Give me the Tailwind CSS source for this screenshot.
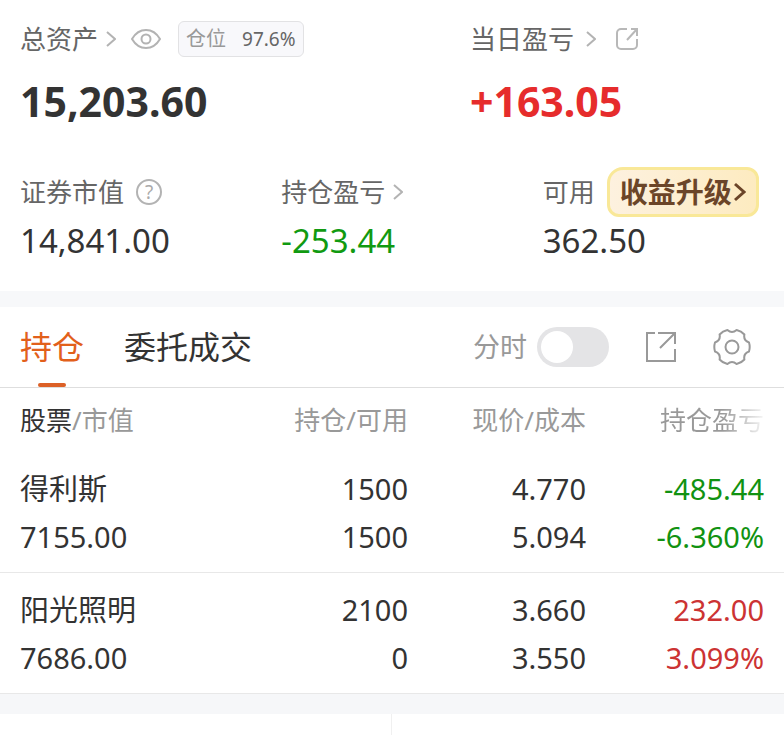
<!DOCTYPE html>
<html lang="zh-CN">
<head>
    <meta charset="UTF-8">
    <meta name="viewport" content="width=device-width, initial-scale=1.0">
    <title>持仓</title>
    <script src="https://cdn.jsdelivr.net/npm/@tailwindcss/browser@4"></script>
</head>
<body class="bg-white font-['Noto_Sans','Noto_Sans_CJK_SC',sans-serif] text-[#333]">

    <!-- account summary -->
    <section class="pt-[21px] pb-[26px]">
        <div class="grid grid-cols-[450fr_334fr]">
            <div class="pl-5">
                <div class="flex h-9 items-center whitespace-nowrap">
                    <a href="#" class="flex items-center gap-2 text-[26px] text-[#666]">
                        总资产
                        <svg class="h-4 w-2.5" viewBox="0 0 10 16" fill="none" stroke="#b3b3b3" stroke-width="2"><path d="M1 1l8 7-8 7"/></svg>
                    </a>
                    <button type="button" aria-label="隐藏金额" class="ml-[15px]">
                        <svg class="h-5 w-[30px]" viewBox="0 0 30 20" fill="none" stroke="#b3b3b3" stroke-width="2"><path d="M1 10C8-2 22-2 29 10C22 22 8 22 1 10Z"/><circle cx="15" cy="10" r="4.5"/></svg>
                    </button>
                    <div class="ml-[17px] flex h-9 items-center gap-4 rounded-md border border-[#e2e2e4] bg-[#f8f8fb] px-[7px] text-[20px]">
                        <span class="text-[#999]">仓位</span>
                        <span class="text-[19px] text-[#666]">97.6%</span>
                    </div>
                </div>
                <p class="mt-5 text-[41px]/[48px] font-bold">15,203.60</p>
            </div>
            <div class="pl-5">
                <div class="flex h-9 items-center whitespace-nowrap">
                    <a href="#" class="flex items-center gap-3 text-[26px] text-[#666]">
                        当日盈亏
                        <svg class="h-4 w-2.5" viewBox="0 0 10 16" fill="none" stroke="#b3b3b3" stroke-width="2"><path d="M1 1l8 7-8 7"/></svg>
                    </a>
                    <button type="button" aria-label="分享" class="ml-5">
                        <svg class="size-[22px]" viewBox="0 0 22 22" fill="none" stroke="#b8b8b8" stroke-width="2"><path d="M11 1H5a4 4 0 0 0-4 4v12a4 4 0 0 0 4 4h12a4 4 0 0 0 4-4v-6M15 1h6v7M21 1L11 12"/></svg>
                    </button>
                </div>
                <p class="mt-5 text-[41px]/[48px] font-bold text-[#e62c2c]">+163.05</p>
            </div>
        </div>

        <div class="mt-[42px] grid grid-cols-3">
            <div class="pl-5">
                <div class="flex h-[50px] items-center gap-3 whitespace-nowrap text-[26px] text-[#666]">
                    证券市值
                    <button type="button" aria-label="说明" class="size-[26px] rounded-full border-2 border-[#b3b3b3] text-[19px]/[22px] text-[#aaa]">?</button>
                </div>
                <p class="text-[33px]/[48px]">14,841.00</p>
            </div>
            <div class="pl-5">
                <a href="#" class="flex h-[50px] items-center gap-2 whitespace-nowrap text-[26px] text-[#666]">
                    持仓盈亏
                    <svg class="h-4 w-2.5" viewBox="0 0 10 16" fill="none" stroke="#b3b3b3" stroke-width="2"><path d="M1 1l8 7-8 7"/></svg>
                </a>
                <p class="text-[33px]/[48px] text-[#119a11]">-253.44</p>
            </div>
            <div class="pl-5">
                <div class="flex h-[50px] items-center gap-3 whitespace-nowrap text-[26px] text-[#666]">
                    可用
                    <button type="button" class="flex h-[50px] items-center rounded-xl rounded-tl-2xl border-3 border-[#f9e898] bg-linear-to-r from-[#fdf1df] to-[#fdebc0] px-2.5 text-[28px] font-bold text-[#6b4528]">
                        收益升级
                        <svg class="h-5 w-3.5" viewBox="0 0 14 20" fill="none" stroke="currentColor" stroke-width="3"><path d="M3 2l9 8-9 8"/></svg>
                    </button>
                </div>
                <p class="text-[33px]/[48px]">362.50</p>
            </div>
        </div>
    </section>

    <div class="h-4 bg-[#f7f8fa]"></div>

    <!-- tabs -->
    <nav class="flex h-[81px] justify-between border-b border-[#dedede] pr-[33px] pl-5 whitespace-nowrap">
        <div class="flex gap-10 text-[32px]">
            <button type="button" class="relative text-[#e2601b]">
                持仓
                <span class="absolute bottom-0 left-1/2 h-1 w-7 -translate-x-1/2 rounded-full bg-[#dc6026]"></span>
            </button>
            <button type="button">委托成交</button>
        </div>
        <div class="flex items-center">
            <label for="minute" class="text-[27px] text-[#999]">分时</label>
            <input id="minute" type="checkbox" role="switch" class="ml-2.5 h-10 w-[72px] appearance-none rounded-full bg-[#e4e4e6] p-1 before:block before:size-8 before:rounded-full before:bg-white checked:bg-[#e2601b] checked:before:translate-x-8">
            <button type="button" aria-label="导出" class="ml-9">
                <svg class="size-8" viewBox="0 0 32 32" fill="none" stroke="#999" stroke-width="2"><path d="M10 2H2v28h28V18M13 2h17v11M30 2L15 17"/></svg>
            </button>
            <button type="button" aria-label="设置" class="ml-9">
                <svg class="size-[38px]" viewBox="-19 -19 38 38" fill="none" stroke="#999" stroke-width="2" stroke-linejoin="round"><path d="M17-4.5Q18.4 0 17 4.5Q11.2 6.5 12.4 12.5Q9.3 16 4.6 17Q0 13-4.6 17Q-9.3 16-12.4 12.5Q-11.2 6.5-17 4.5Q-18.4 0-17-4.5Q-11.2-6.5-12.4-12.5Q-9.3-16-4.6-17Q0-13 4.6-17Q9.3-16 12.4-12.5Q11.2-6.5 17-4.5Z"/><circle r="6.5"/></svg>
            </button>
        </div>
    </nav>

    <!-- positions -->
    <table class="w-full table-fixed text-right text-[29px]/[48px] whitespace-nowrap">
        <colgroup>
            <col>
            <col class="w-[178px]">
            <col class="w-[178px]">
            <col class="w-[198px]">
        </colgroup>
        <thead class="text-[26px] text-[#999]">
            <tr class="h-16">
                <th class="pl-5 text-left font-normal"><span class="text-[#333]">股票</span>/市值</th>
                <th class="font-normal">持仓/可用</th>
                <th class="font-normal">现价/成本</th>
                <th class="pr-5 font-normal"><span class="bg-linear-to-r from-[#999] from-60% to-[#999]/10 bg-clip-text text-transparent">持仓盈亏</span></th>
            </tr>
        </thead>
        <tbody>
            <tr class="border-b border-[#e8e8e8]">
                <td class="pt-[13px] pb-[11px] pl-5 text-left"><p>得利斯</p><p>7155.00</p></td>
                <td class="pt-[13px] pb-[11px]"><p>1500</p><p>1500</p></td>
                <td class="pt-[13px] pb-[11px]"><p>4.770</p><p>5.094</p></td>
                <td class="pt-[13px] pr-5 pb-[11px] text-[#119211]"><p>-485.44</p><p>-6.360%</p></td>
            </tr>
            <tr class="border-b border-[#e8e8e8]">
                <td class="pt-[13px] pb-[11px] pl-5 text-left"><p>阳光照明</p><p>7686.00</p></td>
                <td class="pt-[13px] pb-[11px]"><p>2100</p><p>0</p></td>
                <td class="pt-[13px] pb-[11px]"><p>3.660</p><p>3.550</p></td>
                <td class="pt-[13px] pr-5 pb-[11px] text-[#cc3333]"><p>232.00</p><p>3.099%</p></td>
            </tr>
        </tbody>
    </table>

    <div class="h-5 bg-[#f6f7f9]"></div>
    <div class="grid h-[21px] grid-cols-2">
        <div class="border-r border-[#f0f0f0]"></div>
    </div>

</body>
</html>
